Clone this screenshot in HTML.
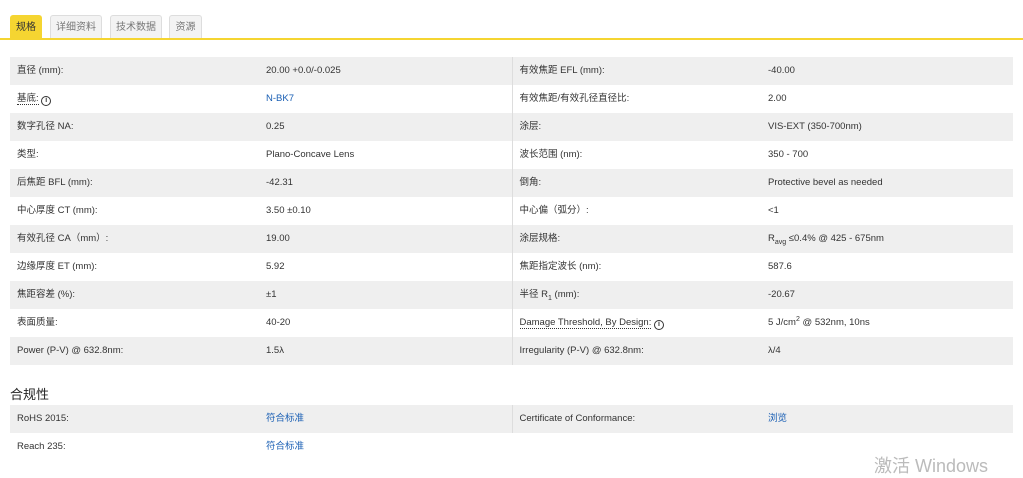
<!DOCTYPE html><html><head><meta charset="utf-8"><style>
body{margin:0;width:1023px;height:468px;background:#fff;font-family:"Liberation Sans","Noto Sans CJK SC",sans-serif;font-size:9.5px;color:#333;overflow:hidden;position:relative}
.tab{position:absolute;top:15px;height:24px;line-height:24px;font-size:10px;text-align:center;border:1px solid #ddd;border-bottom:none;background:#f3f3f3;color:#777;border-radius:3px 3px 0 0;box-sizing:border-box}
.line{position:absolute;left:0;top:38px;width:1023px;height:2px;background:#f5d531}
table{position:absolute;left:10px;width:1003px;border-collapse:collapse;table-layout:fixed}
td{height:28px;padding:0 0 0 7px;vertical-align:middle;box-sizing:border-box;line-height:12px;white-space:nowrap}
tr:nth-child(odd) td{background:#efefef}
td.d{border-left:1px solid #ddd}
a{color:#1a5fb4;text-decoration:none}
.u{border-bottom:1px dotted #333}
sub,sup{font-size:7px;line-height:0}
.i{display:inline-block;width:8px;height:8px;border:1.3px solid #333;border-radius:50%;font-size:7px;line-height:8px;text-align:center;font-weight:bold;vertical-align:-1px}
</style></head><body>
<div class="tab" style="left:10px;width:32px;background:#f5d531;border-color:#f5d531;color:#333">规格</div>
<div class="tab" style="left:50px;width:52px">详细资料</div>
<div class="tab" style="left:110px;width:52px">技术数据</div>
<div class="tab" style="left:169px;width:33px">资源</div>
<div class="line"></div>
<table style="top:57px">
<col style="width:249px"><col style="width:253px"><col style="width:249px"><col>
<tr><td>直径 (mm):</td><td>20.00 +0.0/-0.025</td><td class="d">有效焦距 EFL (mm):</td><td>-40.00</td></tr>
<tr><td><span class="u">基底:</span> <span class="i">i</span></td><td><a>N-BK7</a></td><td class="d">有效焦距/有效孔径直径比:</td><td>2.00</td></tr>
<tr><td>数字孔径 NA:</td><td>0.25</td><td class="d">涂层:</td><td>VIS-EXT (350-700nm)</td></tr>
<tr><td>类型:</td><td>Plano-Concave Lens</td><td class="d">波长范围 (nm):</td><td>350 - 700</td></tr>
<tr><td>后焦距 BFL (mm):</td><td>-42.31</td><td class="d">倒角:</td><td>Protective bevel as needed</td></tr>
<tr><td>中心厚度 CT (mm):</td><td>3.50 ±0.10</td><td class="d">中心偏（弧分）:</td><td>&lt;1</td></tr>
<tr><td>有效孔径 CA（mm）:</td><td>19.00</td><td class="d">涂层规格:</td><td>R<sub>avg</sub> ≤0.4% @ 425 - 675nm</td></tr>
<tr><td>边缘厚度 ET (mm):</td><td>5.92</td><td class="d">焦距指定波长 (nm):</td><td>587.6</td></tr>
<tr><td>焦距容差 (%):</td><td>±1</td><td class="d">半径 R<sub>1</sub> (mm):</td><td>-20.67</td></tr>
<tr><td>表面质量:</td><td>40-20</td><td class="d"><span class="u">Damage Threshold, By Design:</span> <span class="i">i</span></td><td>5 J/cm<sup>2</sup> @ 532nm, 10ns</td></tr>
<tr><td>Power (P-V) @ 632.8nm:</td><td>1.5λ</td><td class="d">Irregularity (P-V) @ 632.8nm:</td><td>λ/4</td></tr>
</table>
<div style="position:absolute;left:10px;top:384px;font-size:13px;color:#222">合规性</div>
<table style="top:405px">
<col style="width:249px"><col style="width:253px"><col style="width:249px"><col>
<tr><td>RoHS 2015:</td><td><a>符合标准</a></td><td class="d">Certificate of Conformance:</td><td><a>浏览</a></td></tr>
<tr><td>Reach 235:</td><td><a>符合标准</a></td><td></td><td></td></tr>
</table>
<div style="position:absolute;left:874px;top:452px;font-size:18px;color:#bbb">激活 Windows</div>
</body></html>
